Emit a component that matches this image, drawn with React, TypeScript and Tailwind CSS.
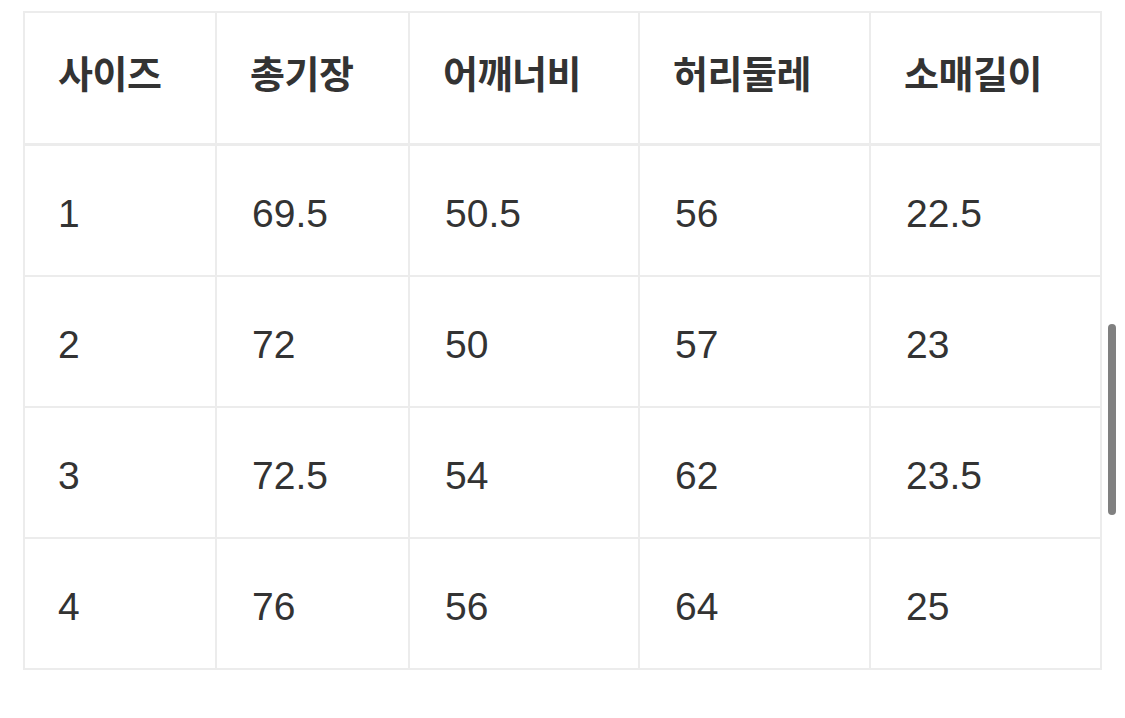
import React from 'react';

const headers = ['사이즈', '총기장', '어깨너비', '허리둘레', '소매길이'];

const rows: string[][] = [
  ['1', '69.5', '50.5', '56', '22.5'],
  ['2', '72', '50', '57', '23'],
  ['3', '72.5', '54', '62', '23.5'],
  ['4', '76', '56', '64', '25'],
];

export default function App() {
  return (
    <div
      className="relative w-[1125px] h-[718px] bg-white overflow-hidden"
      style={{ fontFamily: '"Liberation Sans", "Noto Sans CJK KR", sans-serif' }}
    >
      <div className="ml-[23px] mt-[11px] w-[1079px] grid grid-cols-[192px_193px_230px_231px_231px] border-t-2 border-l-2 border-[#ececec]">
        {headers.map((h) => (
          <div
            key={h}
            className="h-[133px] flex items-center pl-[33px] pb-[5px] border-r-2 border-b-[3px] border-[#ececec] text-[38px] font-bold tracking-[-0.5px] text-[#333333]"
          >
            {h}
          </div>
        ))}
        {rows.map((row, i) =>
          row.map((cell, j) => (
            <div
              key={`${i}-${j}`}
              className={`h-[131px] flex items-center pt-[7px] border-r-2 border-b-2 border-[#ececec] text-[39px] text-[#333333] ${
                j === 0 ? 'pl-[33px]' : 'pl-[35px]'
              }`}
            >
              {cell}
            </div>
          ))
        )}
      </div>

      {/* overlay scrollbar */}
      <div className="absolute left-[1108px] top-[324px] w-[8px] h-[191px] rounded-full bg-[#808080]" />
    </div>
  );
}
